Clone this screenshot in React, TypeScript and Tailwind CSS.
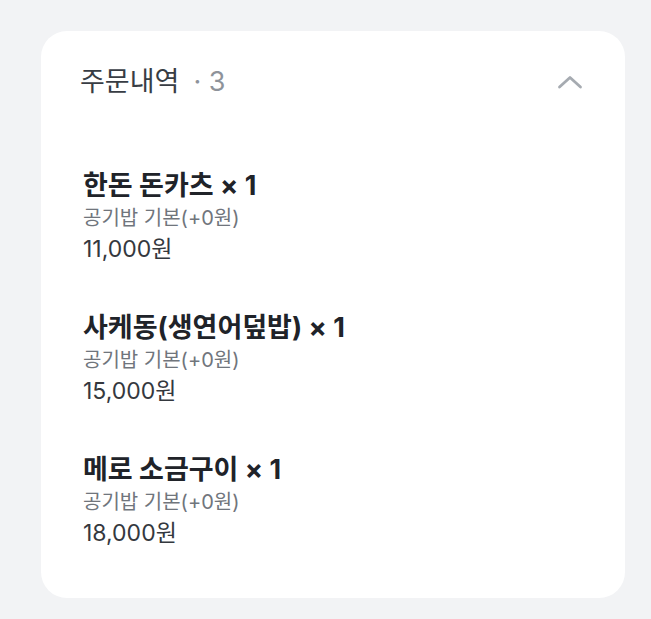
const items = [
  { name: '한돈 돈카츠', qty: 1, option: '공기밥 기본(+0원)', price: '11,000원' },
  { name: '사케동(생연어덮밥)', qty: 1, option: '공기밥 기본(+0원)', price: '15,000원' },
  { name: '메로 소금구이', qty: 1, option: '공기밥 기본(+0원)', price: '18,000원' },
];

export default function App() {
  return (
    <div
      className="min-h-[619px] w-full bg-[#f2f3f5] pl-[41px] pr-[26px] pt-[31px] pb-[21px]"
      style={{ fontFamily: 'Inter, "Noto Sans CJK KR", sans-serif' }}
    >
      <section className="rounded-[26px] bg-white pl-[39px] pr-[42px] pt-[30px] pb-[49px]">
        {/* 헤더 */}
        <div className="flex items-center justify-between h-[42px]">
          <h2 className="flex items-center text-[27px] text-[#383d44]">
            주문내역
            <span className="ml-[14px] text-[#8e939a]">· 3</span>
          </h2>
          <svg width="26" height="16" viewBox="0 0 26 16" fill="none">
            <path d="M2.5 13L13 3.5L23.5 13" stroke="#a6abb1" strokeWidth="2.8" strokeLinecap="round" strokeLinejoin="round" />
          </svg>
        </div>

        <ul className="mt-[66px] flex flex-col gap-[46px] pl-[3px]">
          {items.map((item) => (
            <li key={item.name} className="flex flex-col">
              <p className="text-[27px] font-bold leading-[34px] text-[#202329]">
                {item.name} × {item.qty}
              </p>
              <p className="text-[20px] leading-[30px] text-[#70757c]">{item.option}</p>
              <p className="text-[23px] leading-[32px] text-[#34383e]">{item.price}</p>
            </li>
          ))}
        </ul>
      </section>
    </div>
  );
}
